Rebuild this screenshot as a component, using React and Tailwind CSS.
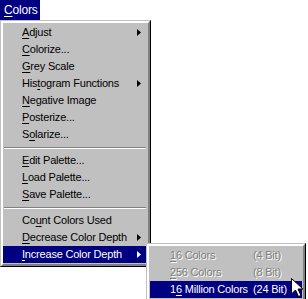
const Mn = ({ text, u }) => {
    // underline the mnemonic letter at index u
    return (
        <>
            {text.slice(0, u)}
            <span className="underline underline-offset-2">{text[u]}</span>
            {text.slice(u + 1)}
        </>
    );
};

const Arrow = ({ white }) => (
    <svg width="4" height="7" viewBox="0 0 4 7" className="absolute right-[6px] top-[5px]">
        <path d="M0 0 L4 3.5 L0 7 Z" fill={white ? '#fff' : '#000'} />
    </svg>
);

const Item = ({ label, u, sub, active }) => (
    <div
        className={`relative h-[17px] pl-[19px] leading-[17px] whitespace-nowrap ${active ? 'bg-[#000080] text-white' : 'text-black'}`}
    >
        <Mn text={label} u={u} />
        {sub && <Arrow white={active} />}
    </div>
);

const Sep = () => (
    <div className="h-[9px] pt-[4px] px-[1px]">
        <div className="h-[1px] bg-[#808080]" />
        <div className="h-[1px] bg-white" />
    </div>
);

const App = () => {
    const groups = [
        [
            { label: 'Adjust', u: 0, sub: true },
            { label: 'Colorize...', u: 0 },
            { label: 'Grey Scale', u: 0 },
            { label: 'Histogram Functions', u: 3, sub: true },
            { label: 'Negative Image', u: 0 },
            { label: 'Posterize...', u: 0 },
            { label: 'Solarize...', u: 1 },
        ],
        [
            { label: 'Edit Palette...', u: 0 },
            { label: 'Load Palette...', u: 0 },
            { label: 'Save Palette...', u: 0 },
        ],
        [
            { label: 'Count Colors Used', u: 2 },
            { label: 'Decrease Color Depth', u: 0, sub: true },
            { label: 'Increase Color Depth', u: 0, sub: true, active: true },
        ],
    ];

    const depths = [
        { label: '16 Colors', u: 0, bits: '(4 Bit)' },
        { label: '256 Colors', u: 0, bits: '(8 Bit)' },
        { label: '16 Million Colors', u: 1, bits: '(24 Bit)', active: true },
    ];

    return (
        <div
            className="relative w-[308px] h-[299px] overflow-hidden bg-white text-[11px] tracking-[-0.2px]"
            style={{ fontFamily: '"Liberation Sans", Arial, sans-serif' }}
        >
            <div className="w-[40px] h-[20px] bg-[#000080] text-white text-[12px] leading-[20px] pl-[4px]">
                <Mn text="Colors" u={0} />
            </div>

            <div className="w-[151px] bg-[#c0c0c0] border border-t-[#c0c0c0] border-l-[#c0c0c0] border-r-black border-b-black">
                <div className="border-2 border-t-white border-l-white border-r-[#808080] border-b-[#808080] py-[1px] pr-[1px]">
                    {groups.map((g, i) => (
                        <div key={i}>
                            {i > 0 && <Sep />}
                            {g.map((it) => (
                                <Item key={it.label} {...it} />
                            ))}
                        </div>
                    ))}
                </div>
            </div>

            {/* submenu popup */}
            <div className="absolute left-[146px] top-[243px] w-[160px] bg-[#c0c0c0] border border-t-[#c0c0c0] border-l-[#c0c0c0] border-r-black border-b-black">
                <div className="border-2 border-t-white border-l-white border-r-[#808080] border-b-[#808080] py-[1px] px-[1px]">
                    {depths.map((d) => (
                        <div
                            key={d.label}
                            className={`flex h-[17px] leading-[17px] pl-[20px] whitespace-nowrap ${d.active
                                    ? 'bg-[#000080] text-white'
                                    : 'text-[#808080] [text-shadow:1px_1px_0_#fff]'
                                }`}
                        >
                            <span className="w-[83px] shrink-0">
                                <Mn text={d.label} u={d.u} />
                            </span>
                            <span>{d.bits}</span>
                        </div>
                    ))}
                </div>
            </div>

            {/* mouse pointer */}
            <svg width="13" height="20" viewBox="0 0 13 20" className="absolute left-[291px] top-[278px]">
                <path d="M0.5 0.5 L0.5 16 L4.5 12 L7.5 18.5 L10 17.5 L7 11 L12 11 Z" fill="#fff" stroke="#000" strokeWidth="1" />
            </svg>
        </div>
    );
};

export default App;
